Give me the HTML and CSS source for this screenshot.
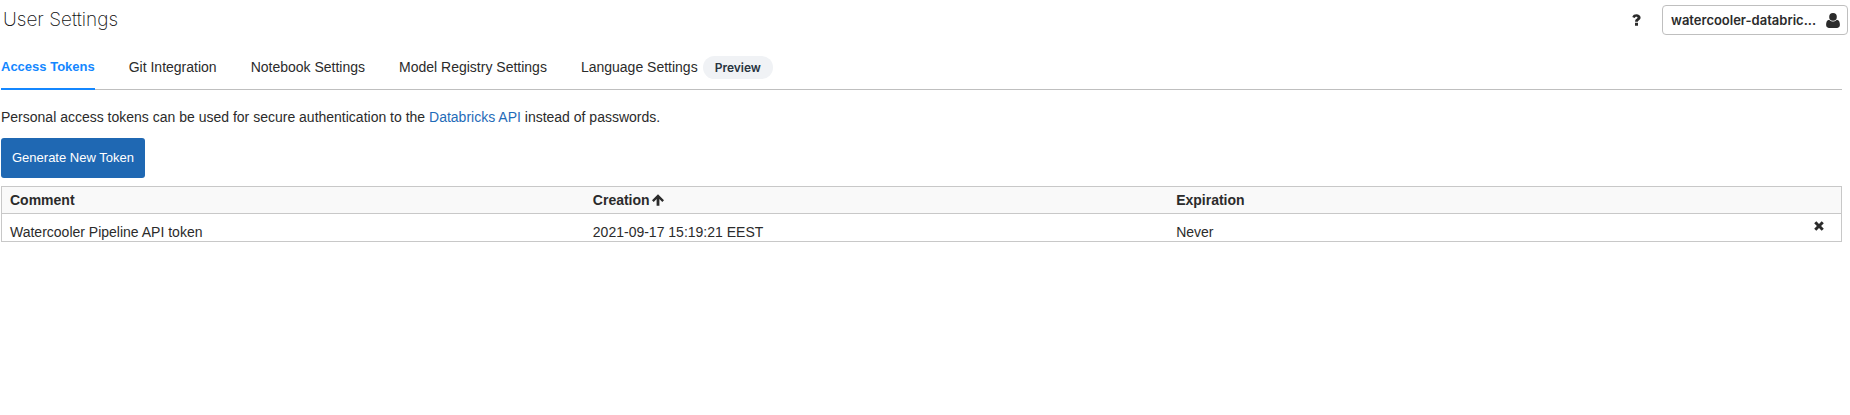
FILE: index.html
```html
<!DOCTYPE html>
<html lang="en">
<head>
<meta charset="utf-8">
<title>User Settings</title>
<link rel="stylesheet" href="styles.css">
</head>
<body>
<header class="topbar">
  <h1 class="title">User Settings</h1>
  <div class="actions">
    <button class="help" type="button" aria-label="Help">
      <svg width="9" height="12" viewBox="0 0 9 12"><path d="M0.3 3.1C1 1 2.4 0.3 4.400 0.3c2.300 0 4.200 1.300 4.200 3.300 0 1.500-.9 2.200-1.800 2.800-.7.4-.9.7-.9 1.300H3.100c0-1.600.5-2.200 1.500-2.900.6-.4.9-.6.9-1.100 0-.6-.5-.9-1.100-.9-.8 0-1.200.4-1.700 1.200zM3 8.800h3v2.900H3z"/></svg>
    </button>
    <button class="account" type="button">
      <span class="account-name">watercooler-databric...</span>
      <svg width="14" height="15" viewBox="0 0 14 15"><circle cx="7" cy="3.900" r="3.800"/><path d="M3.200 6.700C4.200 7.900 5.500 8.500 7 8.500s2.800-.6 3.800-1.800C13 7 13.900 9 13.900 11.800c0 1.800-1 3.100-2.700 3.100H2.800C1.100 14.900.1 13.600.1 11.800.1 9 1 7 3.200 6.700z"/></svg>
    </button>
  </div>
</header>
<main class="content">
  <nav class="tabs">
    <a class="tab active" href="#tokens">Access Tokens</a>
    <a class="tab" href="#git">Git Integration</a>
    <a class="tab" href="#notebook">Notebook Settings</a>
    <a class="tab" href="#registry">Model Registry Settings</a>
    <a class="tab" href="#language">Language Settings <span class="badge">Preview</span></a>
  </nav>
  <p class="intro">Personal access tokens can be used for secure authentication to the <a class="link" href="#api">Databricks API</a> instead of passwords.</p>
  <button class="generate" type="button">Generate New Token</button>
  <table class="tokens">
    <thead>
      <tr>
        <th>Comment</th>
        <th>Creation <svg class="sort" width="12" height="12" viewBox="0 0 12 12"><path d="M6 .2l6 6-1.700 1.700-2.900-2.800v6.700H4.600V5.100L1.700 7.900 0 6.200z"/></svg></th>
        <th>Expiration</th>
        <th class="narrow"></th>
      </tr>
    </thead>
    <tbody>
      <tr>
        <td>Watercooler Pipeline API token</td>
        <td>2021-09-17 15:19:21 EEST</td>
        <td>Never</td>
        <td class="narrow"><button class="revoke" type="button" aria-label="Revoke token"><svg width="10" height="10" viewBox="0 0 10 10"><path d="M2.300.2L5 2.900 7.700.2l2.100 2.100L7.100 5l2.700 2.700-2.100 2.100L5 7.100 2.300 9.800.2 7.700 2.900 5 .2 2.300z"/></svg></button></td>
      </tr>
    </tbody>
  </table>
</main>
</body>
</html>
```
FILE: styles.css
```css
* {
  box-sizing: border-box;
}

body {
  margin: 0;
  background: #fff;
  color: #2b2b2b;
  font: 14px/20px "Liberation Sans", Arial, sans-serif;
}

svg {
  display: block;
  fill: #2b2b2b;
}

button {
  font: inherit;
  color: inherit;
  cursor: pointer;
}

.topbar {
  display: flex;
  justify-content: space-between;
  align-items: center;
  height: 40px;
  padding: 0 2px 0 3px;
}

.title {
  margin: 0;
  color: #111;
  font: 200 19px/24px Inter, sans-serif;
}

.actions {
  display: flex;
  align-items: center;
  gap: 21px;
}

.help,
.revoke {
  padding: 0;
  border: 0;
  background: none;
}

.account {
  display: flex;
  align-items: center;
  justify-content: space-between;
  width: 186px;
  height: 30px;
  padding: 0 7px 0 8px;
  border: 1px solid #bfbfbf;
  border-radius: 4px;
  background: #fff;
}

.account-name {
  font: 600 13px/20px Inter, sans-serif;
  white-space: nowrap;
}

.content {
  padding: 8px 8px 0 1px;
}

.tabs {
  display: flex;
  gap: 34px;
  height: 42px;
  border-bottom: 1px solid #bfbfbf;
}

.tab {
  display: flex;
  align-items: center;
  gap: 5px;
  height: 42px;
  padding-bottom: 4px;
  color: inherit;
  text-decoration: none;
}

.active {
  border-bottom: 2px solid #1487ff;
  padding-bottom: 2px;
  color: #1487ff;
  font-size: 13px;
  font-weight: bold;
}

.badge {
  padding: 0 12px;
  border-radius: 12px;
  background: #f0f2f5;
  color: #283440;
  font: 600 12px/23px Inter, sans-serif;
}

.intro {
  margin: 17px 0 11px;
}

.link {
  color: #1f6bb8;
  text-decoration: none;
}

.generate {
  display: block;
  height: 40px;
  margin-bottom: 8px;
  padding: 0 11px;
  border: 0;
  border-radius: 3px;
  background: #1f68b3;
  color: #fff;
  font-size: 13px;
}

.tokens {
  width: 100%;
  table-layout: fixed;
  border-collapse: collapse;
  border: 1px solid #c8c8c8;
}

.tokens th,
.tokens td {
  padding: 3px 8px;
  text-align: left;
}

.tokens th {
  height: 27px;
  background: #f9f9f9;
  border-bottom: 1px solid #c8c8c8;
}

.tokens td {
  padding: 9px 8px 0;
  line-height: 18px;
}

.tokens .narrow {
  width: 90px;
  padding-top: 7px;
}

.sort {
  display: inline-block;
  margin-left: -2px;
  vertical-align: -1px;
}

.revoke {
  display: block;
  margin: 0 9px 10px auto;
}
```
